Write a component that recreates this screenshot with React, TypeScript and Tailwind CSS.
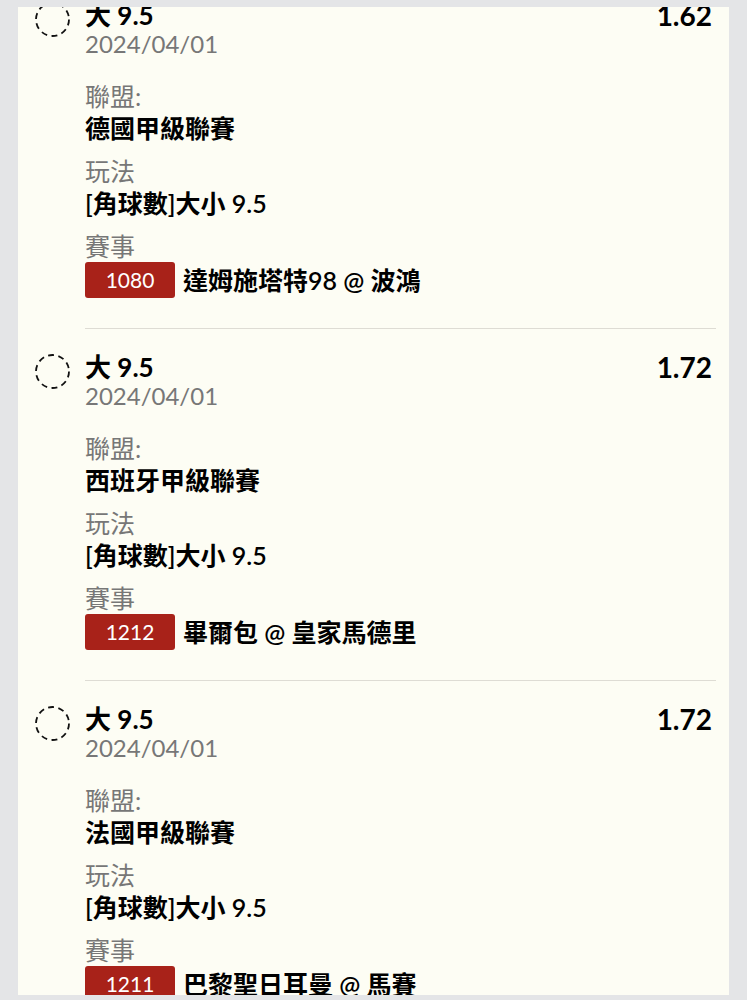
import React from 'react';

interface Bet {
  id: string;
  pick: string;
  date: string;
  odds: string;
  league: string;
  market: string;
  code: string;
  match: string;
}

const bets: Bet[] = [
  { id: 'b1', pick: '大 9.5', date: '2024/04/01', odds: '1.62', league: '德國甲級聯賽', market: '[角球數]大小 9.5', code: '1080', match: '達姆施塔特98 @ 波鴻' },
  { id: 'b2', pick: '大 9.5', date: '2024/04/01', odds: '1.72', league: '西班牙甲級聯賽', market: '[角球數]大小 9.5', code: '1212', match: '畢爾包 @ 皇家馬德里' },
  { id: 'b3', pick: '大 9.5', date: '2024/04/01', odds: '1.72', league: '法國甲級聯賽', market: '[角球數]大小 9.5', code: '1211', match: '巴黎聖日耳曼 @ 馬賽' },
];

const font = { fontFamily: 'Lato, "Noto Sans CJK TC", "Noto Sans", sans-serif' };

const BetItem: React.FC<{ bet: Bet }> = ({ bet }) => (
  <div className="flex pl-[17px] pr-[13px] pt-[23px]">
    {/* select circle */}
    <svg width="35" height="35" viewBox="0 0 35 35" className="mt-[2px] shrink-0">
      <circle cx="17.5" cy="17.5" r="16.5" fill="none" stroke="#111" strokeWidth="1.8" strokeDasharray="6 4.4" />
    </svg>
    <div className="flex-1 ml-[15px] border-b border-[#dedcd4] pb-[30px]">
      <div className="flex justify-between items-start">
        <div>
          <p className="text-[26px] leading-[30px] font-bold text-black">{bet.pick}</p>
          <p className="text-[24px] leading-[28px] text-[#777]">{bet.date}</p>
        </div>
        <p className="text-[28px] leading-[30px] font-bold text-black pr-[4px]">{bet.odds}</p>
      </div>

      <div className="mt-[22px] flex flex-col gap-[11px]">
        <div>
          <p className="text-[25px] leading-[32px] text-[#777]">聯盟:</p>
          <p className="text-[25px] leading-[32px] font-semibold text-black">{bet.league}</p>
        </div>
        <div>
          <p className="text-[25px] leading-[32px] text-[#777]">玩法</p>
          <p className="text-[25px] leading-[32px] font-semibold text-black">{bet.market}</p>
        </div>
        <div>
          <p className="text-[25px] leading-[32px] text-[#777]">賽事</p>
          <div className="flex items-center gap-2">
            <span className="w-[90px] h-9 rounded-[3px] bg-[#a82219] text-white text-[21px] flex items-center justify-center">{bet.code}</span>
            <span className="text-[25px] leading-[32px] font-semibold text-black">{bet.match}</span>
          </div>
        </div>
      </div>
    </div>
  </div>
);

const App: React.FC = () => {
  return (
    <div className="w-full h-[1000px] bg-[#e4e5e7] pt-[7px] px-[18px] overflow-hidden" style={font}>
      <div className="h-[988px] bg-[#fdfdf4] overflow-hidden">
        <div className="-mt-[30px]">
          {bets.map(b => (
            <BetItem key={b.id} bet={b} />
          ))}
        </div>
      </div>
    </div>
  );
};

export default App;
